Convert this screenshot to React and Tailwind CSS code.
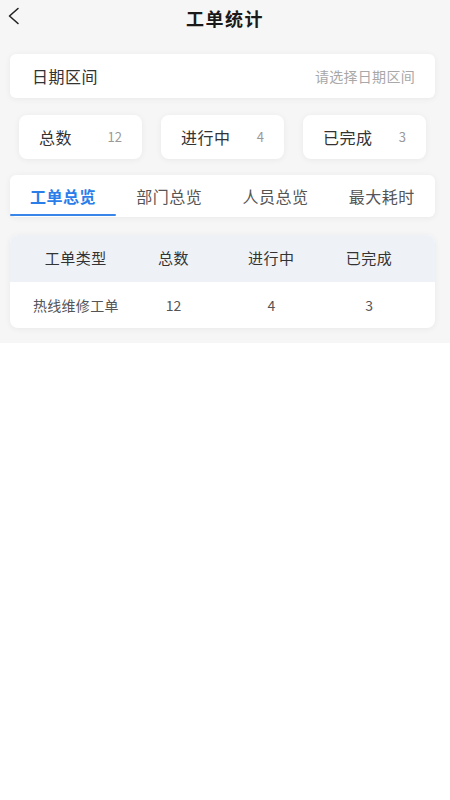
import React from "react";

const font = { fontFamily: '"Noto Sans CJK SC", "Noto Sans", sans-serif' };

export default function App() {
  const tabs = ["工单总览", "部门总览", "人员总览", "最大耗时"];
  const stats = [
    ["总数", "12"],
    ["进行中", "4"],
    ["已完成", "3"],
  ];
  return (
    <div className="w-[450px] min-h-[800px] bg-white" style={font}>
      <div className="bg-[#f6f6f6] pb-[15px]">
        <div className="relative h-[36px] flex items-center justify-center">
          <svg className="absolute left-[7px] top-[7px]" width="13" height="18" viewBox="0 0 13 18" fill="none">
            <path d="M11 1.5L2.5 9L11 16.5" stroke="#222" strokeWidth="1.6" strokeLinecap="round" strokeLinejoin="round" />
          </svg>
          <div className="text-[18px] font-bold text-[#1a1a1a] tracking-[1.5px] leading-none">工单统计</div>
        </div>

        <div className="mt-[18px] ml-[10px] mr-[15px] h-[44px] bg-white rounded-[6px] shadow-[0_1px_6px_rgba(0,0,0,0.06)] flex items-center justify-between pl-[22px] pr-[20px]">
          <span className="text-[16px] text-[#333] tracking-[0.5px]">日期区间</span>
          <span className="text-[14px] text-[#a8a8a8] tracking-[0.3px]">请选择日期区间</span>
        </div>

        <div className="mt-[17px] pl-[19px] pr-[24px] grid grid-cols-3 gap-[19px]">
          {stats.map(([k, v]) => (
            <div key={k} className="h-[44px] bg-white rounded-[8px] shadow-[0_1px_6px_rgba(0,0,0,0.06)] flex items-center justify-between px-[20px]">
              <span className="text-[16px] text-[#333] tracking-[0.5px]">{k}</span>
              <span className="text-[13px] text-[#999]">{v}</span>
            </div>
          ))}
        </div>

        <div className="mt-[16px] ml-[10px] mr-[15px] h-[42px] bg-white rounded-[6px] shadow-[0_1px_6px_rgba(0,0,0,0.06)] grid grid-cols-4">
          {tabs.map((t, i) => (
            <div key={t} className="relative flex items-center justify-center">
              <span className={i === 0 ? "text-[16px] font-bold text-[#2b7de9] tracking-[0.5px]" : "text-[16px] text-[#555] tracking-[0.5px]"}>{t}</span>
              {i === 0 && <div className="absolute left-0 right-0 bottom-[1px] h-[2px] bg-[#3a86e8] rounded-full" />}
            </div>
          ))}
        </div>

        <div className="mt-[18px] ml-[10px] mr-[15px] bg-white rounded-[8px] shadow-[0_1px_6px_rgba(0,0,0,0.06)] overflow-hidden">
          <div className="h-[47px] bg-[#eef2f7] grid grid-cols-4 px-[17px] items-center text-center text-[15px] text-[#333] tracking-[0.5px]">
            <span>工单类型</span>
            <span>总数</span>
            <span>进行中</span>
            <span>已完成</span>
          </div>
          <div className="h-[46px] grid grid-cols-4 px-[17px] items-center text-center text-[14px] text-[#555]">
            <span className="tracking-[0.3px]">热线维修工单</span>
            <span>12</span>
            <span>4</span>
            <span>3</span>
          </div>
        </div>
      </div>
    </div>
  );
}
